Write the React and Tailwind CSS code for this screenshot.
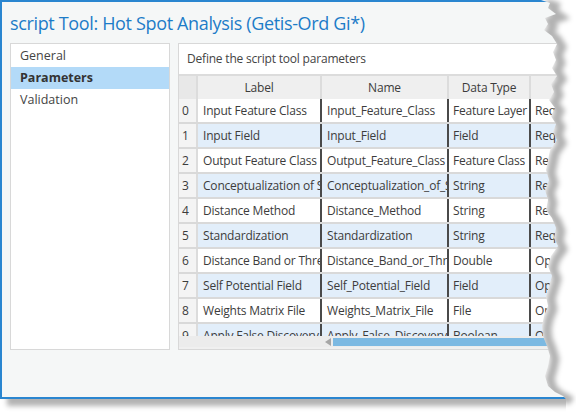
// Script tool properties dialog, Parameters page
// window frame + two panels; torn right edge drawn as an svg overlay

const ROWS = [
  ['Input Feature Class', 'Input_Feature_Class', 'Feature Layer', 'Required'],
  ['Input Field', 'Input_Field', 'Field', 'Required'],
  ['Output Feature Class', 'Output_Feature_Class', 'Feature Class', 'Required'],
  ['Conceptualization of Spatial Relationships', 'Conceptualization_of_Spatial_Relationships', 'String', 'Required'],
  ['Distance Method', 'Distance_Method', 'String', 'Required'],
  ['Standardization', 'Standardization', 'String', 'Required'],
  ['Distance Band or Threshold Distance', 'Distance_Band_or_Threshold_Distance', 'Double', 'Optional'],
  ['Self Potential Field', 'Self_Potential_Field', 'Field', 'Optional'],
  ['Weights Matrix File', 'Weights_Matrix_File', 'File', 'Optional'],
  ['Apply False Discovery Rate (FDR) Correction', 'Apply_False_Discovery_Rate__FDR__Correction', 'Boolean', 'Optional'],
]

const MENU = ['General', 'Parameters', 'Validation']

// jagged edge of the torn screenshot, page coords
const EDGE = [
  [541, 0], [550, 3], [548, 8], [556, 14], [545, 18], [548, 24], [544, 30], [552, 36], [557, 44],
  [553, 52], [556, 60], [552, 68], [557, 76], [551, 84], [554, 92], [549, 100], [555, 108],
  [551, 116], [556, 124], [553, 132], [557, 140], [550, 150], [548, 160], [546, 170], [549, 180],
  [545, 190], [548, 200], [546, 210], [552, 218], [556, 228], [554, 238], [558, 246], [551, 256],
  [548, 266], [552, 276], [549, 286], [546, 296], [548, 306], [544, 316], [542, 326], [543, 336],
  [547, 346], [550, 356], [548, 366], [545, 376], [548, 386], [555, 392], [563, 396], [566, 399],
]

function TornEdge() {
  const pts = EDGE.map(([x, y]) => `${x},${y}`).join(' ')
  const region = `${pts} 566,417 582,417 582,0`
  const shadow = EDGE.map(([x, y]) => `${x + 5},${y + 3}`).join(' ')
  return (
    <svg className="absolute left-0 top-0 pointer-events-none" width="582" height="417" viewBox="0 0 582 417">
      <defs>
        <clipPath id="tear">
          <polygon points={region} />
        </clipPath>
        <filter id="blur" x="-20%" y="-5%" width="140%" height="110%">
          <feGaussianBlur stdDeviation="2.5" />
        </filter>
      </defs>
      <polygon points={region} fill="#ffffff" />
      <g clipPath="url(#tear)">
        <polyline points={shadow} fill="none" stroke="rgba(0,0,0,0.3)" strokeWidth="9" filter="url(#blur)" />
      </g>
    </svg>
  )
}

function SideMenu() {
  return (
    <div className="w-[160px] h-[307px] shrink-0 bg-white border border-[#d8d8d8] pt-px">
      {MENU.map((m) => (
        <div
          key={m}
          className={`h-[22px] flex items-center pl-[9px] text-[12.5px] ${m === 'Parameters' ? 'bg-[#b3daf8] font-bold text-[#333]' : 'text-[#444]'}`}
        >
          {m}
        </div>
      ))}
    </div>
  )
}

function ParamTable() {
  return (
    <div className="flex flex-col text-[12px] tracking-[-0.2px] text-[#3c3c3c]">
      {/* column headers */}
      <div className="flex h-[25px] border-t-2 border-[#dcdcdc] bg-[#efefef]">
        <div className="w-[19px] shrink-0 bg-[#e8e8e8] border-r-2 border-[#dcdcdc]" />
        <div className="w-[124px] shrink-0 flex items-center justify-center border-r-2 border-[#dcdcdc]">Label</div>
        <div className="w-[127px] shrink-0 flex items-center justify-center border-r-2 border-[#dcdcdc]">Name</div>
        <div className="w-[82px] shrink-0 flex items-center justify-center border-r-2 border-[#dcdcdc]">Data Type</div>
        <div className="w-[82px] shrink-0 flex items-center justify-center">Type</div>
      </div>

      {/* rows, last one cut by the scrollbar */}
      <div className="h-[237px] overflow-hidden">
        {ROWS.map((r, i) => (
          <div key={i} className={`flex h-[25px] border-b-2 border-[#d9d9d9] ${i % 2 ? 'bg-[#e2eefa]' : 'bg-white'}`}>
            <div className="w-[19px] shrink-0 bg-[#f4f4f4] border-r-2 border-[#dcdcdc] flex items-center pl-[3px]">{i}</div>
            <div className="w-[124px] shrink-0 overflow-hidden whitespace-nowrap flex items-center pl-[5px] border-r-2 border-[#4a4a4a]">{r[0]}</div>
            <div className="w-[127px] shrink-0 overflow-hidden whitespace-nowrap flex items-center pl-[5px] border-r-2 border-[#4a4a4a]">{r[1]}</div>
            <div className="w-[82px] shrink-0 overflow-hidden whitespace-nowrap flex items-center pl-[4px] border-r-2 border-[#4a4a4a]">{r[2]}</div>
            <div className="w-[82px] shrink-0 overflow-hidden whitespace-nowrap flex items-center pl-[4px]">{r[3]}</div>
          </div>
        ))}
      </div>

      {/* horizontal scrollbar */}
      <div className="flex items-center h-[11px] bg-[#ececec]">
        <div className="w-[143px] shrink-0" />
        <div className="w-[11px] shrink-0 flex items-center justify-center">
          <div className="w-0 h-0 border-y-[4px] border-y-transparent border-r-[6px] border-r-[#a6a6a6]" />
        </div>
        <div className="flex-1 h-[8px] bg-[#7cb9e2]" />
      </div>
      <div className="h-[2px] bg-[#f0f0f0]" />
    </div>
  )
}

export default function App() {
  return (
    <div className="relative w-[582px] h-[417px] bg-white overflow-hidden font-['Open_Sans',sans-serif]">
      <div className="w-[566px] h-[399px] bg-[#f5f7f7] border-2 border-r-0 border-[#2a86d0] shadow-[7px_7px_5px_rgba(0,0,0,0.3)] flex flex-col">
        <div className="h-[41px] shrink-0 pl-2 flex items-center">
          <span className="text-[18px] tracking-[-0.35px] text-[#1d7cc8] leading-none">script Tool: Hot Spot Analysis (Getis-Ord Gi*)</span>
        </div>
        <div className="flex gap-2 pl-2">
          <SideMenu />
          <div className="flex-1 h-[307px] bg-white border border-[#d8d8d8] overflow-hidden flex flex-col">
            <div className="h-[30px] shrink-0 flex items-center pl-2 text-[12px] tracking-[-0.2px] text-[#444]">Define the script tool parameters</div>
            <ParamTable />
          </div>
        </div>
      </div>
      <TornEdge />
    </div>
  )
}
